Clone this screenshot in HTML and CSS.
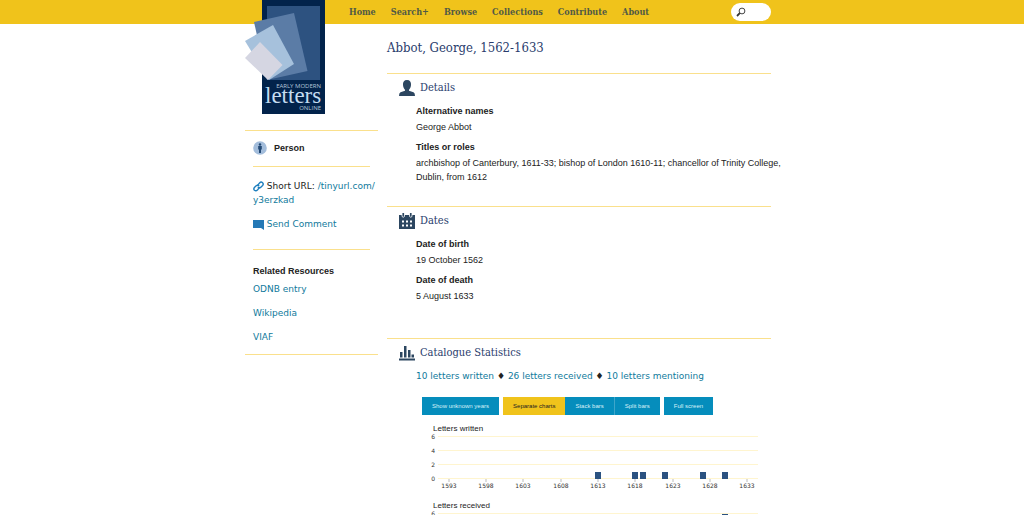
FILE: index.html
```html
<!DOCTYPE html>
<html lang="en">
<head>
<meta charset="utf-8">
<meta name="viewport" content="width=device-width, initial-scale=1">
<title>Abbot, George, 1562-1633</title>
<link rel="stylesheet" href="styles.css">
</head>
<body>
<header class="topbar">
  <div class="wrap topbar-inner">
    <nav class="menu" aria-label="Main">
      <a href="#">Home</a>
      <a href="#">Search+</a>
      <a href="#">Browse</a>
      <a href="#">Collections</a>
      <a href="#">Contribute</a>
      <a href="#">About</a>
    </nav>
    <form class="search">
      <svg class="search-icon" viewBox="0 0 10 10" aria-hidden="true"><circle cx="6" cy="4" r="2.9" fill="#fff" stroke="#444" stroke-width="1"/><path d="M3.8 6.2L1 9" stroke="#333" stroke-width="1.8"/></svg>
      <input class="search-input" type="search" aria-label="Search">
    </form>
  </div>
</header>
<div class="wrap page">
  <aside class="sidebar">
    <a class="logo" href="#" aria-label="Early Modern Letters Online">
      <svg class="logo-art" viewBox="0 0 80 114">
        <path d="M17 0H80V114H17z" fill="#02234b"/>
        <path d="M22 6H75V80H22z" fill="#2d5280"/>
        <path d="M9 22L49 13L62.500 71L22 80z" fill="#5b7ca6"/>
        <path d="M0 41L28 25L49 64L24 80z" fill="#a6c1dc"/>
        <path d="M0 58L15 42L37.500 65L23 80z" fill="#d5d6e2"/>
        <text class="logo-small" x="76" y="88" text-anchor="end">EARLY MODERN</text>
        <text class="logo-big" x="20" y="103">letters</text>
        <text class="logo-small" x="76" y="110" text-anchor="end">ONLINE</text>
      </svg>
    </a>
    <div class="side-box">
      <div class="kind">
        <svg class="kind-icon" viewBox="0 0 14 14" aria-hidden="true"><circle cx="7" cy="7" r="6.800" fill="#a3bddb"/><circle cx="7" cy="3.500" r="1.200" fill="#244a75"/><path d="M5.200 5H8.800V8.500H8V12H6V8.500H5.200z" fill="#244a75"/></svg>
        <strong>Person</strong>
      </div>
      <div class="tools">
        <p class="short-url"><svg class="tool-icon" viewBox="0 0 11 11" aria-hidden="true"><g fill="none" stroke="#1e7fbe" stroke-width="1.400" stroke-linecap="round"><path d="M4.700 4.200L6.600 1.900Q8 .4 9.600 1.700Q10.900 3 9.600 4.500L7.600 6.400Q6.400 7.300 5.200 6.300"/><path d="M6.200 6.800L4.400 9.100Q3 10.500 1.500 9.300Q.2 8 1.400 6.500L3.400 4.600Q4.600 3.700 5.800 4.700"/></g></svg> Short URL: <a href="#">/tinyurl.com/<wbr>y3erzkad</a></p>
        <p><a href="#"><svg class="tool-icon" viewBox="0 0 11 11" aria-hidden="true"><path d="M0 1H11V11L8 9H0z" fill="#2579b6"/></svg> Send Comment</a></p>
      </div>
      <div class="related">
        <h2>Related Resources</h2>
        <ul>
          <li><a href="#">ODNB entry</a></li>
          <li><a href="#">Wikipedia</a></li>
          <li><a href="#">VIAF</a></li>
        </ul>
      </div>
    </div>
  </aside>
  <main class="content">
    <h1>Abbot, George, 1562-1633</h1>
    <section class="panel details">
      <h2><svg class="panel-icon" viewBox="0 0 16 16" aria-hidden="true"><path d="M8 0C11 0 12.300 2 12 5C11.800 7.500 10.800 9 10 9.800V10.800L14.500 12.300Q16 13 16 16H0Q0 13 1.500 12.300L6 10.800V9.800C5.200 9 4.200 7.500 4 5C3.700 2 5 0 8 0z" fill="#2c4660"/></svg>Details</h2>
      <div class="panel-body">
        <h3>Alternative names</h3>
        <p>George Abbot</p>
        <h3>Titles or roles</h3>
        <p class="roles">archbishop of Canterbury, 1611-33; bishop of London 1610-11; chancellor of Trinity College, Dublin, from 1612</p>
      </div>
    </section>
    <section class="panel dates">
      <h2><svg class="panel-icon" viewBox="0 0 16 16" aria-hidden="true"><path d="M0 2H16V16H0z" fill="#2c4660"/><path d="M3 0V3.500Q4.300 5 5.500 3.500V0M10.500 0V3.500Q11.700 5 13 3.500V0" fill="#2c4660" stroke="#fff" stroke-width=".8"/><path d="M3 8.500H13.500M3 12.500H13.500" stroke="#fff" stroke-width="1.800" stroke-dasharray="2 2"/></svg>Dates</h2>
      <div class="panel-body">
        <h3>Date of birth</h3>
        <p>19 October 1562</p>
        <h3>Date of death</h3>
        <p>5 August 1633</p>
      </div>
    </section>
    <section class="panel stats">
      <h2><svg class="panel-icon" viewBox="0 0 16 16" aria-hidden="true"><path d="M0 13.500H16V15.500H0zM1 7H3.500V12.500H1zM5 1H7.500V12.500H5zM9 5H11.500V12.500H9zM12.500 9.500H15V12.500H12.500z" fill="#2c4660"/></svg>Catalogue Statistics</h2>
      <div class="panel-body">
        <p class="totals"><a href="#">10 letters written</a> <span>♦</span> <a href="#">26 letters received</a> <span>♦</span> <a href="#">10 letters mentioning</a></p>
        <div class="buttons">
          <button type="button">Show unknown years</button>
          <div class="group">
            <button type="button" class="active">Separate charts</button>
            <button type="button">Stack bars</button>
            <button type="button">Split bars</button>
          </div>
          <button type="button">Full screen</button>
        </div>
        <svg class="chart" viewBox="0 0 355 77" role="img" aria-label="Letters written by year">
          <text class="chart-title" x="17" y="15">Letters written</text>
          <path class="grid" d="M22 20.500H342M22 34.500H342M22 48.500H342M22 62.500H342"/>
          <path class="tick" d="M33 63V66M70 63V66M107 63V66M145 63V66M182 63V66M219 63V66M257 63V66M294 63V66M331 63V66"/>
          <g class="axis" text-anchor="end"><text x="19" y="23">6</text><text x="19" y="37">4</text><text x="19" y="51">2</text><text x="19" y="65">0</text></g>
          <g class="axis" text-anchor="middle"><text x="33" y="72">1593</text><text x="70" y="72">1598</text><text x="107" y="72">1603</text><text x="145" y="72">1608</text><text x="182" y="72">1613</text><text x="219" y="72">1618</text><text x="257" y="72">1623</text><text x="294" y="72">1628</text><text x="331" y="72">1633</text></g>
          <path class="bar" d="M179 56h6v7h-6zM216 56h6v7h-6zM224 56h6v7h-6zM246 56h6v7h-6zM284 56h6v7h-6zM306 56h6v7h-6z"/>
        </svg>
        <svg class="chart" viewBox="0 0 355 77" role="img" aria-label="Letters received by year">
          <text class="chart-title" x="17" y="15">Letters received</text>
          <path class="grid" d="M22 20.500H342M22 34.500H342M22 48.500H342M22 62.500H342"/>
          <g class="axis" text-anchor="end"><text x="19" y="23">6</text><text x="19" y="37">4</text><text x="19" y="51">2</text><text x="19" y="65">0</text></g>
          <path class="bar" d="M306 21h6v42h-6z"/>
        </svg>
      </div>
    </section>
  </main>
</div>
</body>
</html>
```
FILE: styles.css
```css
* { box-sizing: border-box; }
body {
  margin: 0;
  padding-right: 8px;
  background: #fff;
  color: #222;
  font: 9px/14px "Liberation Sans", Arial, sans-serif;
}
h1, h2, h3, p, ul { margin: 0; padding: 0; }
a { color: #107a9c; text-decoration: none; }
.wrap { max-width: 526px; margin: 0 auto; }
.topbar { margin-right: -8px; padding-right: 8px; background: #f0c31b; }
.topbar-inner {
  display: flex;
  align-items: center;
  justify-content: space-between;
  height: 24px;
  padding-left: 104px;
}
.menu { display: flex; gap: 15px; }
.menu a {
  color: #515a46;
  font: bold 9px/14px "DejaVu Serif Condensed", "DejaVu Serif", serif;
}
.search {
  display: flex;
  align-items: center;
  width: 40px;
  height: 18px;
  padding: 0 5px;
  border-radius: 9px;
  background: #fff;
}
.search-icon { flex: none; width: 10px; height: 10px; }
.search-input { width: 100%; min-width: 0; padding: 0; border: 0; background: none; outline: 0; font-size: 9px; }
.page {
  display: grid;
  grid-template-columns: 133px minmax(0, 1fr);
  column-gap: 9px;
}
.logo { display: block; margin-top: -24px; height: 130px; }
.logo-art { display: block; position: relative; width: 80px; height: 114px; }
.logo-small { fill: #b5c7db; font: 6px "Open Sans", sans-serif; }
.logo-big { fill: #c5dcf1; font: 23px "Liberation Serif", serif; }
.side-box {
  padding: 0 8px;
  border: solid #fae08c;
  border-width: 1px 0;
  font-family: "DejaVu Sans", sans-serif;
}
.kind {
  display: flex;
  align-items: center;
  gap: 7px;
  height: 36px;
  padding-bottom: 2px;
  border-bottom: 1px solid #fae08c;
  font-family: "Liberation Sans", Arial, sans-serif;
}
.kind-icon { width: 14px; height: 14px; }
.tools { padding: 12px 0 18px; border-bottom: 1px solid #fae08c; }
.tools p + p { margin-top: 10px; }
.short-url { margin-right: -8px; }
.tool-icon { width: 11px; height: 11px; vertical-align: -3px; }
.related { padding: 14px 0 10px; }
.related h2 { font: bold 9px/14px "Liberation Sans", Arial, sans-serif; }
.related ul { display: grid; gap: 10px; margin-top: 4px; list-style: none; }
.content h1 {
  padding: 14px 0 15px;
  color: #293c6c;
  font: 13px/20px "DejaVu Serif Condensed", "DejaVu Serif", serif;
}
.panel { border-top: 1px solid #fae08c; padding: 4px 0 22px; }
.dates { padding-bottom: 35px; }
.panel h2 {
  display: flex;
  align-items: center;
  gap: 5px;
  padding-left: 12px;
  color: #293c6c;
  font: 11px/20px "DejaVu Serif Condensed", "DejaVu Serif", serif;
}
.panel-icon { width: 16px; height: 16px; }
.panel-body { padding: 6px 0 0 29px; }
.panel-body h3 { font-size: 9px; line-height: 14px; }
.panel-body h3 + p { margin-top: 2px; }
.panel-body p + h3 { margin-top: 6px; }
.roles { margin-right: -16px; }
.totals { font-family: "DejaVu Sans", sans-serif; }
.buttons { display: flex; gap: 4px; margin: 14px 0 1px 6px; }
.group { display: flex; }
.buttons button {
  height: 18px;
  padding: 0 10px;
  border: 0;
  background: #058dbc;
  color: #d8f0f8;
  font: 6px/14px "Liberation Sans", Arial, sans-serif;
}
.group button + button + button { border-left: 1px solid #3fa6ca; }
.buttons .active { background: #f0c31b; color: #222; }
.chart { display: block; width: 100%; }
.chart-title { fill: #222; font: 8px "Liberation Sans", Arial, sans-serif; }
.axis { fill: #333; font: 6px "DejaVu Sans", sans-serif; }
.grid { stroke: #fff5cf; stroke-width: 1; }
.tick { stroke: #bbb; stroke-width: 1; }
.bar { fill: #2b5280; }
```
